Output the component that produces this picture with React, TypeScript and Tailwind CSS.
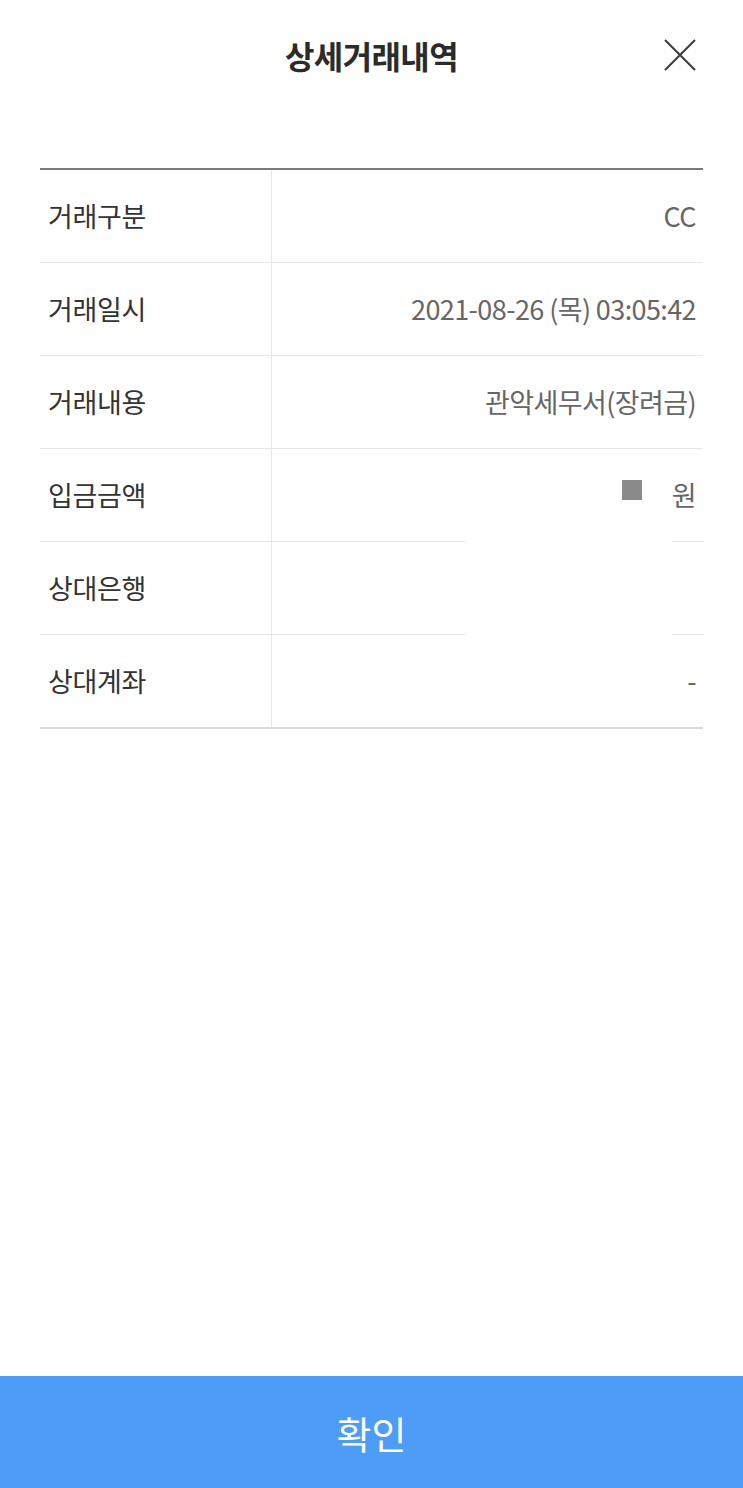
const rows = [
  { label: '거래구분', value: 'CC' },
  { label: '거래일시', value: '2021-08-26 (목) 03:05:42' },
  { label: '거래내용', value: '관악세무서(장려금)' },
  { label: '입금금액', value: 'amount', gap: true },
  { label: '상대은행', value: '', gap: true },
  { label: '상대계좌', value: '-' },
]

export default function App() {
  return (
    <div
      className="flex min-h-screen w-full flex-col bg-white"
      style={{ fontFamily: '"Noto Sans CJK KR", "Noto Sans", sans-serif' }}
    >
      {/* Header */}
      <header className="relative flex h-[110px] items-center justify-center">
        <h1 className="text-[32px] font-bold tracking-[-0.6px] text-[#2b2b2b]">상세거래내역</h1>
        <button className="absolute right-[47px] top-[39px] text-[#3a3a3a]">
          <svg width="32" height="32" viewBox="0 0 32 32" fill="none" stroke="currentColor" strokeWidth="2">
            <path d="M1 1L31 31M31 1L1 31" />
          </svg>
        </button>
      </header>

      {/* Detail table */}
      <div className="mx-[40px] mt-[58px] border-t-2 border-b-2 border-t-[#7a7a7a] border-b-[#dcdcdc]">
        {rows.map((row, i) => (
          <div key={row.label} className="flex flex-col">
            <div className="flex h-[92px]">
              <div className="flex w-[232px] items-center border-r border-[#e6e6e6] pl-2 text-[27px] tracking-[-0.3px] text-[#333]">
                {row.label}
              </div>
              <div className="flex flex-1 items-center justify-end pr-[7px] text-[27px] tracking-[-0.6px] text-[#666]">
                {row.value === 'amount' ? (
                  <span className="flex items-center">
                    <span className="mb-[10px] mr-[30px] inline-block h-[20px] w-[20px] bg-[#8a8a8a]" />
                    원
                  </span>
                ) : (
                  row.value
                )}
              </div>
            </div>
            {i < rows.length - 1 &&
              (row.gap ? (
                <div className="flex h-px">
                  <div className="w-[425px] bg-[#e6e6e6]" />
                  <div className="flex-1" />
                  <div className="w-[30px] bg-[#e6e6e6]" />
                </div>
              ) : (
                <div className="h-px bg-[#e6e6e6]" />
              ))}
          </div>
        ))}
      </div>

      {/* Confirm button */}
      <button className="mt-auto flex h-[112px] w-full items-center justify-center bg-[#4d9cf6] text-[38px] text-white">
        확인
      </button>
    </div>
  )
}
